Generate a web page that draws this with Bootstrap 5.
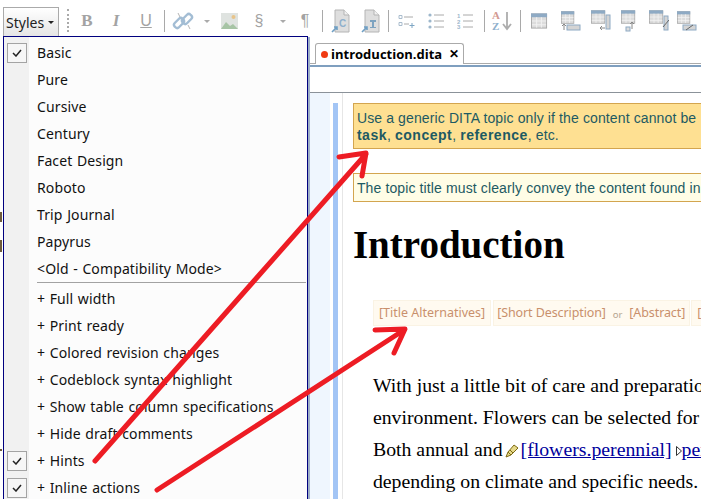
<!DOCTYPE html>
<html lang="en">
<head>
<meta charset="utf-8">
<title>Styles menu</title>
<link href="https://cdn.jsdelivr.net/npm/bootstrap@5.3.0/dist/css/bootstrap.min.css" rel="stylesheet">
<style>
html,body{height:499px;overflow:hidden;background:#fff}
body{width:701px;position:relative;font-family:"Noto Sans",sans-serif;font-size:14px;color:#1a1a1a}
.tbar{height:37px;padding:7px 0 0 3px;white-space:nowrap;overflow:hidden}
.tbar>*{flex-shrink:0}
.style-btn{width:56px;height:30px;border:1px solid #aaa;border-bottom:0;background:linear-gradient(#fff,#e4e4e4);padding:0 0 0 2px;font-size:14px;color:#222;line-height:28px}
.caret-d{width:0;height:0;border:3px solid transparent;border-top:3px solid #222;border-bottom:0}
.grip{width:0;height:23px;border-left:2px dotted #aaa;margin:2px 3px 0 8px}
.tslot{display:flex;justify-content:center;align-items:center;height:28px;flex:none;color:#9a9a9a}
.w4{width:4px}.w8{width:8px}.w14{width:14px}.w18{width:18px}.w22{width:22px}.w24{width:24px}.w26{width:26px}.w28{width:28px}.w29{width:29px}.w30{width:30px}.w32{width:32px}.w34{width:34px}
.tsep{width:1px;height:22px;background:#a9a9a9}
.gl{font:bold 17px "Liberation Serif",serif;color:#a3a3a3}
.gl-i{font-style:italic;font-weight:700}
.gl-u{text-decoration:underline;font-weight:400;font-family:"Liberation Sans",sans-serif;font-size:16px}
.gl-p{font:16px "Liberation Sans",sans-serif;color:#a3a3a3}
.caret-g{width:0;height:0;border:3px solid transparent;border-top:3px solid #aaa;border-bottom:0}
.main-col{margin-left:308px;border-left:2px solid #9fb0c8;height:462px}
.tabrow{height:27px;padding:6px 0 0 5px;border-bottom:1px solid #aaa;background:#fff}
.etab{width:149px;height:21px;border:1px solid #aaa;border-bottom:0;border-radius:3px 3px 0 0;background:#fff;font:bold 13px "Open Sans",sans-serif;color:#000;padding-left:5px;line-height:19px}
.dirty{width:7px;height:7px;border-radius:50%;background:#f03a12;margin-right:3px}
.x-mark{font-size:12px;margin-right:4px;font-weight:700;font-family:"Liberation Sans",sans-serif}
.blueline{height:2px;margin-top:1px;background:#7f9fbf}
.bread{height:26px;border-bottom:1px solid #8b9299;background:#fff}
.editor{height:406px;overflow:hidden}
.gutter-a{width:20px;background:#eff6fe}
.gutter-b{width:5px;margin:10px 4px 0 3px;background:#a3c5f5}
.gutter-c{width:1px;background:#e6e6e6}
.doc{padding:10px 0 0 10px;width:359px;overflow:hidden;white-space:nowrap}
.hint{font:14px/17px "Liberation Sans",sans-serif;color:#1d5a63;border:1px solid #d3a54f;border-right:0;padding:6px 0 5px 3px;width:360px;overflow:hidden;letter-spacing:.12px}
.hint b{letter-spacing:.5px}
.hint-a{background:#fee092;height:46px}
.hint-b{background:#fffde6;height:29px;margin-top:24px;padding-top:6px}
.doc-h{font:bold 39px/44px "Liberation Serif",serif;color:#000;margin:21px 0 0;}
.ph-row{margin:33px 0 0 20px;height:26px;font-size:12.5px;color:#c9906c}
.ph{background:#fffaf0;border:1px solid #faf3e4;padding:0 5px;line-height:24px;margin-right:2px;flex:none}
.ph-or{font-size:9.5px;color:#b5a48f;padding-top:2px}
.ph-mid{background:#fffaf0;border:1px solid #faf3e4;padding:0 4px 0 3px;line-height:24px;margin-right:1px;display:flex;gap:7px;flex:none;letter-spacing:-.1px}
.para{margin:43px 0 0 20px;font:19.8px/32px "Liberation Serif",serif;color:#000}
.para a{color:#00009c}
.pen{margin:0 2px 0 -3px}
.styles-menu{position:absolute;left:3px;top:36px;width:305px;height:470px;border:1px solid #00007f;border-radius:0;padding:2px 0 0;margin:0;background:linear-gradient(90deg,#f1f1f1 25px,#fcfcfc 25px);z-index:5;display:block}
.mi{height:27px;padding:0 0 0 3px;display:flex;align-items:center;color:#111;font-size:14px;line-height:27px;white-space:nowrap;background:transparent;letter-spacing:.12px;word-spacing:.8px}
.mi-chk{width:20px;height:20px;flex:none;border:1px solid #a3a3a3;background:#f6f6f6;display:flex;align-items:center;justify-content:center;margin-right:10px}
.mi-none{width:20px;flex:none;margin-right:10px}
.mi-sep{height:1px;margin:0 1px 2px 33px;background:#a2a2a2;opacity:1;border:0}
.overlay{position:absolute;left:0;top:0;z-index:9;pointer-events:none}
</style>
</head>
<body>
<svg width="0" height="0" class="position-absolute">
 <defs>
  <symbol id="tbl" viewBox="0 0 18 16"><rect x=".5" y=".5" width="16" height="15" fill="#dcdcdc" stroke="#a8a8a8"/><rect x="0" y="0" width="17" height="4" fill="#8eaac4"/><path d="M6 4v11M11 4v11M1 8h15M1 12h15" stroke="#f2f2f2"/></symbol>
  <symbol id="doc" viewBox="0 0 20 24"><path d="M4 1h9l5 5v17H4z" fill="#dedede" stroke="#b4b4b4"/><path d="M13 1v5h5" fill="#f0f0f0" stroke="#b4b4b4"/><path d="M1 23l5-5M3 18h3v3" fill="none" stroke="#6f9fc4" stroke-width="1.6"/></symbol>
 </defs>
</svg>

<div class="tbar d-flex align-items-start">
  <div class="style-btn d-flex align-items-center justify-content-between"><span>Styles</span><span class="caret-d me-1"></span></div>
  <div class="grip"></div>
  <div class="tslot w30"><span class="gl">B</span></div>
  <div class="tslot w28"><span class="gl gl-i">I</span></div>
  <div class="tslot w32"><span class="gl gl-u">U</span></div>
  <div class="tslot w4"><span class="tsep"></span></div>
  <div class="tslot w34"><svg width="22" height="20" viewBox="0 0 22 20" fill="none" stroke="#a3bdd4" stroke-width="2.4"><rect x="1.500" y="9" width="11" height="6" rx="2.500" transform="rotate(-45 7 12)"/><rect x="9.500" y="5" width="11" height="6" rx="2.500" transform="rotate(-45 15 8)"/><path d="M6 2l2 4M16 14l2 4" stroke="#b5b5b5" stroke-width="1"/></svg></div>
  <div class="tslot w14"><span class="caret-g"></span></div>
  <div class="tslot w30"><svg width="17" height="16" viewBox="0 0 17 16"><rect width="17" height="16" fill="#dfe3e0"/><circle cx="12.500" cy="4" r="2" fill="#e8c48a"/><path d="M0 16l5-7 4 4 3-2 5 5z" fill="#a7c4a5"/></svg></div>
  <div class="tslot w30"><span class="gl-p">§</span></div>
  <div class="tslot w18"><span class="caret-g"></span></div>
  <div class="tslot w26"><span class="gl-p">¶</span></div>
  <div class="tslot w8"><span class="tsep"></span></div>
  <div class="tslot w30"><svg width="20" height="24" viewBox="0 0 20 24"><use href="#doc"/><text x="8" y="18" font-family="Liberation Sans" font-weight="700" font-size="10" fill="#8fb0cc">C</text></svg></div>
  <div class="tslot w30"><svg width="20" height="24" viewBox="0 0 20 24"><use href="#doc"/><path d="M9 11h6v2h-2v5h2v1H9v-1h2v-5H9z" fill="#7da3c0"/></svg></div>
  <div class="tslot w4"><span class="tsep"></span></div>
  <div class="tslot w34"><svg width="18" height="14" viewBox="0 0 18 14" fill="none"><path d="M1 1.500h3v3H1zM1 8.500h3v3H1z" stroke="#a9bccd"/><path d="M6 3h9M6 10h5" stroke="#aaa"/><path d="M14 9v5M11.500 11.500h5" stroke="#7ea6c4"/></svg></div>
  <div class="tslot w24"><svg width="17" height="16" viewBox="0 0 17 16"><g fill="#9db7cc"><circle cx="2" cy="2" r="1.600"/><circle cx="2" cy="8" r="1.600"/><circle cx="2" cy="14" r="1.600"/></g><path d="M6 2h10M6 8h10M6 14h10" stroke="#aaa"/></svg></div>
  <div class="tslot w34"><svg width="17" height="16" viewBox="0 0 17 16"><g fill="#9db7cc" font-size="6" font-family="Liberation Sans" font-weight="700"><text x="0" y="5">1</text><text x="0" y="11">2</text><text x="0" y="16">3</text></g><path d="M6 2h10M6 8h10M6 14h10" stroke="#aaa"/></svg></div>
  <div class="tslot w4"><span class="tsep"></span></div>
  <div class="tslot w32"><svg width="22" height="22" viewBox="0 0 22 22"><g font-family="Liberation Serif" font-weight="700" font-size="11"><text x="1" y="9" fill="#d39a92">A</text><text x="1" y="20" fill="#8fb0cc">Z</text></g><path d="M16 2v17M12 14l4 5 4-5" fill="none" stroke="#adadad" stroke-width="1.800"/></svg></div>
  <div class="tslot w4"><span class="tsep"></span></div>
  <div class="tslot w34"><svg width="17" height="16"><use href="#tbl"/></svg></div>
  <div class="tslot w30"><svg width="20" height="20" viewBox="0 0 20 20"><svg width="14" height="13"><use href="#tbl"/></svg><rect x="6" y="14" width="13" height="5" fill="#d4d4d4" stroke="#8eaac4"/><path d="M3 19v-6M1 15l2-2 2 2" fill="none" stroke="#888"/></svg></div>
  <div class="tslot w30"><svg width="20" height="22" viewBox="0 0 20 22"><svg width="15" height="14"><use href="#tbl"/></svg><rect x="15" y="5" width="4" height="14" fill="#d4d4d4" stroke="#8eaac4"/><path d="M14 18H9M11 16l-2 2 2 2" fill="none" stroke="#888"/></svg></div>
  <div class="tslot w29"><svg width="20" height="22" viewBox="0 0 20 22"><svg width="15" height="14"><use href="#tbl"/></svg><rect x="5" y="17" width="4" height="4" fill="#ddd" stroke="#8eaac4"/><path d="M11 19v-7M9 14l2-2 2 2" fill="none" stroke="#888"/></svg></div>
  <div class="tslot w28"><svg width="20" height="22" viewBox="0 0 20 22"><svg width="15" height="14"><use href="#tbl"/></svg><rect x="15" y="6" width="4" height="14" fill="#d4d4d4" stroke="#8eaac4"/><path d="M14 17l6-7" stroke="#666"/></svg></div>
  <div class="tslot w30"><svg width="22" height="20" viewBox="0 0 22 20"><svg width="14" height="13"><use href="#tbl"/></svg><rect x="6" y="14" width="13" height="5" fill="#d4d4d4" stroke="#8eaac4"/><path d="M9 19l7-5" stroke="#666"/></svg></div>
</div>

<div class="main-col">
  <div class="tabrow">
    <div class="etab d-flex align-items-center"><span class="dirty"></span><span class="flex-grow-1">introduction.dita</span><span class="x-mark">✕</span></div>
  </div>
  <div class="blueline"></div>
  <div class="bread"></div>
  <div class="editor d-flex">
    <div class="gutter-a"></div>
    <div class="gutter-b"></div>
    <div class="gutter-c"></div>
    <div class="doc">
      <div class="hint hint-a">Use a generic DITA topic only if the content cannot be<br><b>task</b>, <b>concept</b>, <b>reference</b>, etc.</div>
      <div class="hint hint-b">The topic title must clearly convey the content found in</div>
      <h1 class="doc-h">Introduction</h1>
      <div class="ph-row d-flex">
        <span class="ph">[Title Alternatives]</span>
        <span class="ph-mid"><span>[Short Description]</span><span class="ph-or">or</span><span>[Abstract]</span></span>
        <span class="ph">[Prolog]</span>
      </div>
      <div class="para">With just a little bit of care and preparation, any<br>environment. Flowers can be selected for their<br>Both annual and <svg width="14" height="14" viewBox="0 0 14 14" class="pen"><path d="M1 13l2-5 6-7 4 3-7 7z" fill="#e6d98a" stroke="#7d6a14"/><path d="M3 8l3 3M5 6l3 3" stroke="#7d6a14"/></svg><a href="#">[flowers.perennial]</a><svg width="6" height="12" viewBox="0 0 6 12" class="ms-1"><path d="M.5 1.500l5 4.500-5 4.500z" fill="#fff" stroke="#333"/></svg><a href="#">perennials</a><br>depending on climate and specific needs.</div>
    </div>
  </div>
</div>

<div class="dropdown-menu show styles-menu">
  <div class="mi"><span class="mi-chk"><svg width="10" height="8" viewBox="0 0 10 8"><path d="M1 4l3 3 5-6" fill="none" stroke="#222" stroke-width="1.500"/></svg></span>Basic</div>
  <div class="mi"><span class="mi-none"></span>Pure</div>
  <div class="mi"><span class="mi-none"></span>Cursive</div>
  <div class="mi"><span class="mi-none"></span>Century</div>
  <div class="mi"><span class="mi-none"></span>Facet Design</div>
  <div class="mi"><span class="mi-none"></span>Roboto</div>
  <div class="mi"><span class="mi-none"></span>Trip Journal</div>
  <div class="mi"><span class="mi-none"></span>Papyrus</div>
  <div class="mi"><span class="mi-none"></span>&lt;Old - Compatibility Mode&gt;</div>
  <div class="mi-sep"></div>
  <div class="mi"><span class="mi-none"></span>+ Full width</div>
  <div class="mi"><span class="mi-none"></span>+ Print ready</div>
  <div class="mi"><span class="mi-none"></span>+ Colored revision changes</div>
  <div class="mi"><span class="mi-none"></span>+ Codeblock syntax highlight</div>
  <div class="mi"><span class="mi-none"></span>+ Show table column specifications</div>
  <div class="mi"><span class="mi-none"></span>+ Hide draft comments</div>
  <div class="mi"><span class="mi-chk"><svg width="10" height="8" viewBox="0 0 10 8"><path d="M1 4l3 3 5-6" fill="none" stroke="#222" stroke-width="1.500"/></svg></span>+ Hints</div>
  <div class="mi"><span class="mi-chk"><svg width="10" height="8" viewBox="0 0 10 8"><path d="M1 4l3 3 5-6" fill="none" stroke="#222" stroke-width="1.500"/></svg></span>+ Inline actions</div>
</div>

<svg class="overlay" width="701" height="499" viewBox="0 0 701 499">
  <g fill="#6e5a3a"><rect x="0" y="212" width="2" height="10"/><rect x="0" y="240" width="2" height="12"/><rect x="0" y="449" width="2" height="2"/></g>
  <g fill="none" stroke="#ed1c24" stroke-width="5" stroke-linecap="round" stroke-linejoin="round">
    <path d="M95 461L366 154M339 157L366 153L362 176"/>
    <path d="M157 490L404 330M375 330L405 329L394 353"/>
  </g>
</svg>
</body>
</html>
